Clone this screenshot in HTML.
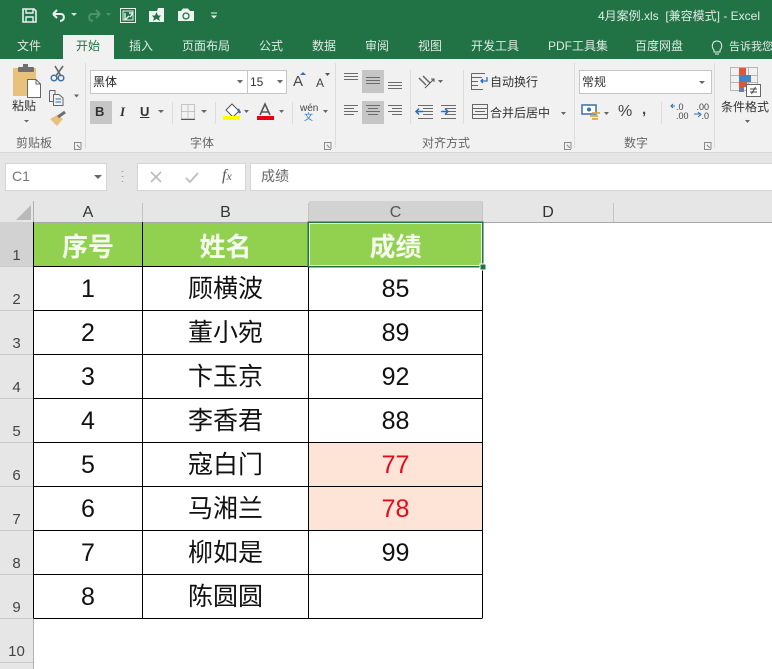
<!DOCTYPE html>
<html><head><meta charset="utf-8"><style>
html,body{margin:0;padding:0;background:#fff}
#p{position:relative;width:772px;height:669px;overflow:hidden;background:#fff;font-family:"Liberation Sans","Noto Sans CJK SC",sans-serif;color:#444}
#p div{position:absolute}
.t{white-space:nowrap;font-size:12px;line-height:16px}
.w{color:#dfeae4}
.g{color:#666}
.c{text-align:center}
.h{font-size:16px;line-height:20px;color:#333;text-align:center}
.r{font-size:15px;line-height:18px;color:#444;text-align:center;width:33px;left:0}
.d{font-size:25px;line-height:32px;color:#111;text-align:center;white-space:nowrap}
.hd{font-weight:bold;color:#f6fbef;font-size:26px;line-height:32px;text-align:center;white-space:nowrap;font-family:"Liberation Sans","Noto Sans CJK SC",sans-serif}
svg{position:absolute;left:0;top:0}
</style></head><body><div id="p">
<div style="left:0;top:0;width:772px;height:59px;background:#217346"></div>
<div style="left:63px;top:35px;width:51px;height:24px;background:#f1f1f1"></div>
<div style="left:0;top:59px;width:772px;height:93px;background:#f1f1f1;border-bottom:1px solid #d6d6d6"></div>
<div style="left:0;top:153px;width:772px;height:48px;background:#e6e6e6"></div>
<div style="left:90px;top:70px;width:157px;height:22px;background:#fff;border:1px solid #c6c6c6"></div>
<div style="left:247px;top:70px;width:38px;height:22px;background:#fff;border:1px solid #c6c6c6"></div>
<div style="left:579px;top:70px;width:131px;height:22px;background:#fff;border:1px solid #c6c6c6"></div>
<div style="left:90px;top:101px;width:22px;height:23px;background:#c6c6c6"></div>
<div style="left:362px;top:70px;width:22px;height:23px;background:#c6c6c6"></div>
<div style="left:362px;top:101px;width:22px;height:23px;background:#c6c6c6"></div>
<div style="left:5px;top:163px;width:100px;height:26px;background:#fff;border:1px solid #d4d4d4"></div>
<div style="left:137px;top:163px;width:107px;height:26px;background:#fff;border:1px solid #d4d4d4"></div>
<div style="left:250px;top:163px;width:522px;height:26px;background:#fff;border:1px solid #d4d4d4;border-right:0"></div>

<div class="t w" style="left:598px;top:8px;font-size:12px">4月案例.xls&nbsp; [兼容模式] - Excel</div>
<div class="t w" style="left:17px;top:38px">文件</div>
<div class="t" style="left:76px;top:38px;color:#217346">开始</div>
<div class="t w" style="left:129px;top:38px">插入</div>
<div class="t w" style="left:182px;top:38px">页面布局</div>
<div class="t w" style="left:259px;top:38px">公式</div>
<div class="t w" style="left:312px;top:38px">数据</div>
<div class="t w" style="left:365px;top:38px">审阅</div>
<div class="t w" style="left:418px;top:38px">视图</div>
<div class="t w" style="left:471px;top:38px">开发工具</div>
<div class="t w" style="left:548px;top:38px">PDF工具集</div>
<div class="t w" style="left:635px;top:38px">百度网盘</div>
<div class="t w" style="left:729px;top:39px;font-size:11px">告诉我您</div>

<div class="t" style="left:12px;top:98px;color:#333">粘贴</div>
<div class="t" style="left:93px;top:74px;color:#222">黑体</div>
<div class="t" style="left:250px;top:74px;color:#333">15</div>
<div class="t" style="left:490px;top:74px;color:#333">自动换行</div>
<div class="t" style="left:490px;top:105px;color:#333">合并后居中</div>
<div class="t" style="left:582px;top:74px;color:#333">常规</div>
<div class="t" style="left:721px;top:99px;color:#333">条件格式</div>
<div class="t" style="left:95px;top:104px;font-weight:bold;font-size:13px;color:#333">B</div>
<div class="t" style="left:120px;top:104px;font-style:italic;font-size:13px;font-family:'Liberation Serif',serif;font-weight:bold;color:#333">I</div>
<div class="t" style="left:140px;top:104px;font-size:13px;font-weight:bold;text-decoration:underline;color:#333">U</div>
<div class="t" style="left:293px;top:74px;font-size:15px;color:#444">A</div>
<div class="t" style="left:316px;top:75px;font-size:12px;color:#444">A</div>
<div class="t" style="left:300px;top:104px;font-size:10px;line-height:10px;color:#444">wén</div>
<div class="t" style="left:304px;top:112px;font-size:9px;line-height:10px;color:#2a6fb8">文</div>
<div class="t" style="left:618px;top:104px;font-size:16px;color:#444">%</div>
<div class="t" style="left:642px;top:102px;font-size:15px;font-weight:bold;color:#444">,</div>
<div class="t" style="left:676px;top:103px;font-size:9px;line-height:9px;color:#444">.0<br>.00</div>
<div class="t" style="left:695px;top:103px;font-size:9px;line-height:9px;color:#444;text-align:right;width:14px">.00<br>.0</div>

<div class="t g" style="left:16px;top:135px">剪贴板</div>
<div class="t g" style="left:190px;top:135px">字体</div>
<div class="t g" style="left:422px;top:135px">对齐方式</div>
<div class="t g" style="left:624px;top:135px">数字</div>

<div class="t" style="left:12px;top:168px;font-size:14px;color:#777">C1</div>
<div class="t" style="left:261px;top:168px;font-size:14px;color:#666">成绩</div>
<div class="t" style="left:222px;top:168px;font-size:16px;font-style:italic;font-family:'Liberation Serif',serif;color:#555">f<span style="font-size:12px">x</span></div>

<!-- sheet headers -->
<div style="left:0;top:201px;width:772px;height:21px;background:#e6e6e6;border-bottom:1px solid #a8a8a8"></div>
<div style="left:0;top:201px;width:33px;height:468px;background:#e6e6e6"></div>
<div style="left:33px;top:201px;width:1px;height:468px;background:#b0b0b0"></div>
<div style="left:309px;top:201px;width:174px;height:21px;background:#d2d2d2"></div>
<div style="left:0;top:222px;width:33px;height:44px;background:#d2d2d2"></div>
<div class="h" style="left:34px;top:203px;width:108px">A</div>
<div class="h" style="left:143px;top:203px;width:165px">B</div>
<div class="h" style="left:309px;top:203px;width:173px;color:#555">C</div>
<div class="h" style="left:483px;top:203px;width:130px">D</div>
<div class="r" style="top:247px">1</div>
<div class="r" style="top:291px">2</div>
<div class="r" style="top:335px">3</div>
<div class="r" style="top:379px">4</div>
<div class="r" style="top:423px">5</div>
<div class="r" style="top:467px">6</div>
<div class="r" style="top:511px">7</div>
<div class="r" style="top:555px">8</div>
<div class="r" style="top:599px">9</div>
<div class="r" style="top:643px">10</div>

<!-- cell fills -->
<div style="left:34px;top:223px;width:449px;height:44px;background:#92d050"></div>
<div style="left:309px;top:443px;width:173px;height:87px;background:#fde4d6"></div>

<div class="hd" style="left:34px;top:231px;width:108px">序号</div>
<div class="hd" style="left:143px;top:231px;width:165px">姓名</div>
<div class="hd" style="left:309px;top:231px;width:173px">成绩</div>

<div class="d" style="left:34px;top:273px;width:108px">1</div><div class="d" style="left:143px;top:273px;width:165px">顾横波</div><div class="d" style="left:309px;top:273px;width:173px">85</div>
<div class="d" style="left:34px;top:317px;width:108px">2</div><div class="d" style="left:143px;top:317px;width:165px">董小宛</div><div class="d" style="left:309px;top:317px;width:173px">89</div>
<div class="d" style="left:34px;top:361px;width:108px">3</div><div class="d" style="left:143px;top:361px;width:165px">卞玉京</div><div class="d" style="left:309px;top:361px;width:173px">92</div>
<div class="d" style="left:34px;top:405px;width:108px">4</div><div class="d" style="left:143px;top:405px;width:165px">李香君</div><div class="d" style="left:309px;top:405px;width:173px">88</div>
<div class="d" style="left:34px;top:449px;width:108px">5</div><div class="d" style="left:143px;top:449px;width:165px">寇白门</div><div class="d" style="left:309px;top:449px;width:173px;color:#e00b1c">77</div>
<div class="d" style="left:34px;top:493px;width:108px">6</div><div class="d" style="left:143px;top:493px;width:165px">马湘兰</div><div class="d" style="left:309px;top:493px;width:173px;color:#e00b1c">78</div>
<div class="d" style="left:34px;top:537px;width:108px">7</div><div class="d" style="left:143px;top:537px;width:165px">柳如是</div><div class="d" style="left:309px;top:537px;width:173px">99</div>
<div class="d" style="left:34px;top:581px;width:108px">8</div><div class="d" style="left:143px;top:581px;width:165px">陈圆圆</div>

<svg width="772" height="669" viewBox="0 0 772 669" fill="none">
<!-- table grid -->
<g stroke="#000" stroke-width="1" shape-rendering="crispEdges">
<path d="M34 266.500H308M33.500 310.500H482.500M33.500 354.500H482.500M33.500 398.500H482.500M33.500 442.500H482.500M33.500 486.500H482.500M33.500 530.500H482.500M33.500 574.500H482.500M33.500 618.500H482.500"/>
<path d="M142.500 222V618M308.500 266V618M482.500 266V618M33.500 222V618"/>
</g>
<g stroke="#c4c4c4" shape-rendering="crispEdges">
<path d="M142.500 203V222M308.500 203V222M482.500 203V222M613.500 203V222"/>
</g>
<g stroke="#c9c9c9" shape-rendering="crispEdges">
<path d="M0 266.500H33M0 310.500H33M0 354.500H33M0 398.500H33M0 442.500H33M0 486.500H33M0 530.500H33M0 574.500H33M0 618.500H33M0 662.500H33"/>
</g>
<path d="M31 205V220H16Z" fill="#b9b9b9"/>
<!-- selection -->
<rect x="308.500" y="222.500" width="174" height="44" stroke="#217346" stroke-width="2" shape-rendering="crispEdges"/>
<rect x="309.500" y="223.500" width="172" height="42" stroke="#e8f5dc" stroke-width="1" shape-rendering="crispEdges"/>
<rect x="480" y="264" width="6" height="6" fill="#217346" stroke="#fff" stroke-width="1" shape-rendering="crispEdges"/>
<!-- QAT -->
<g stroke="#e9f2ed" stroke-width="1.600">
<path d="M23 9H34L36 11V22H23Z"/><path d="M26 9V13H33V9M26 22V17H33V22" stroke-width="1.400"/>
<path d="M53 14H61C65 14 65 21 60 21M53 14L57 10M53 14L57 18" stroke-width="2"/>
</g>
<path d="M100 14H92C88 14 88 21 93 21M100 14L96 10M100 14L96 18" stroke="#4d9270" stroke-width="2"/>
<path d="M71 13H77L74 16Z" fill="#e9f2ed" opacity=".9"/>
<path d="M106 13H111L108.500 16Z" fill="#4d9270"/>
<rect x="120.500" y="8.500" width="15" height="14" stroke="#e9f2ed"/>
<path d="M123 11H133V20H123Z" stroke="#e9f2ed"/><path d="M125 20V13M125 20L129 16M129 13H133M133 13L130 17" stroke="#e9f2ed" stroke-width="1.400"/>
<path d="M149 11H157L158 8H164V22H149Z" fill="#eef5f1"/>
<path d="M156.500 12L158 15.500L161 15.500L159 18L160 21L156.500 19L153 21L154 18L152 15.500L155 15.500Z" fill="#217346"/>
<path d="M178 11H181L183 8.500H188L190 11H194V21H178Z" fill="#eef5f1"/>
<circle cx="186" cy="16" r="3" stroke="#217346" stroke-width="1.300"/>
<path d="M211 13H217" stroke="#eef5f1"/><path d="M211 15.500H217L214 18.500Z" fill="#eef5f1"/>
<!-- separators -->
<g stroke="#dcdcdc" shape-rendering="crispEdges">
<path d="M85.500 63V148M335.500 63V148M574.500 63V148M714.500 63V148M410.500 70V124M463.500 70V124M172.500 102V124M215.500 102V124M292.500 102V124M661.500 102V124"/>
</g>
<!-- clipboard -->
<path d="M13 68H36V96H27V78H13Z" fill="#e8c27c"/><path d="M13 78H27V96H13Z" fill="#e8c27c"/>
<rect x="18" y="67" width="16" height="5" rx="1" fill="#6f6f6f"/><rect x="23" y="64" width="5" height="4" fill="#6f6f6f"/>
<path d="M27.500 79.500H36L40.500 84V97.500H27.500Z" fill="#fff" stroke="#666"/><path d="M36 79.500V84H40.500" stroke="#666"/>
<path d="M55 66L61 76M63 66L56 76" stroke="#666" stroke-width="1.600"/>
<circle cx="54" cy="78" r="2.800" stroke="#3a6fa8" stroke-width="1.500"/><circle cx="61" cy="78" r="2.800" stroke="#3a6fa8" stroke-width="1.500"/>
<path d="M49.500 90.500H55V95M49.500 90.500V101.500H53M53.500 94.500H59L63 98V105.500H53.500Z" stroke="#666"/><path d="M55.500 99H61M55.500 102H61" stroke="#3a6fa8"/>
<path d="M74 94.500H79L76.500 97.500Z" fill="#666"/>
<path d="M24 120H29L26.500 122.500Z" fill="#666"/>
<path d="M50 119L57 126L63 119L57 115Z" fill="#e8c27c"/><path d="M58 117L65 112" stroke="#6f6f6f" stroke-width="3"/>
<!-- arrows/dropdown triangles -->
<g fill="#666">
<path d="M237 80H243L240 83.500ZM277 80H283L280 83.500ZM158 110H164L161 113ZM201 110H207L204 113ZM244 110H249L246.500 113ZM279 110H284L281.500 113ZM323 110H328L325.500 113ZM438 80H443L440.500 83ZM561 112H566L563.500 115ZM699 81H705L702 84ZM604 112H609L606.500 115ZM745 120H750L747.500 123Z"/>
</g>
<path d="M300 75L303 72L306 75Z" fill="#3a6fa8"/><path d="M325 73H330L327.500 76Z" fill="#555"/>
<!-- borders icon -->
<path d="M181.500 104.500H194.500V118.500H181.500ZM188 104.500V118.500M181.500 111.500H194.500" stroke="#999" stroke-dasharray="1 1"/><path d="M181 119.500H195" stroke="#555"/>
<!-- fill + font colour -->
<path d="M226 110L232 104L239 111L233 117Z" fill="#fff" stroke="#555"/><path d="M238 109L240 113" stroke="#3a6fa8" stroke-width="2.400"/>
<rect x="223" y="116" width="17" height="4" fill="#ffff00"/>
<path d="M260 115L265 104L270 115M262 112H268" stroke="#555" stroke-width="1.600"/>
<rect x="257" y="116" width="17" height="4" fill="#e60012"/>
<!-- align icons -->
<g stroke="#6b6b6b" shape-rendering="crispEdges">
<path d="M344 73.500H358M344 76.500H358M344 79.500H358"/>
<path d="M366 77.500H380M366 80.500H380M366 83.500H380"/>
<path d="M388 82.500H402M388 85.500H402M388 88.500H402"/>
<path d="M344 105.500H358M344 108.500H354M344 111.500H358M344 114.500H354"/>
<path d="M366 105.500H380M368 108.500H378M366 111.500H380M368 114.500H378"/>
<path d="M388 105.500H402M392 108.500H402M388 111.500H402M392 114.500H402"/>
<path d="M423 108.500H433M423 111.500H433M423 114.500H433M418 105.500H433M418 118.500H433"/>
<path d="M445 108.500H456M445 111.500H456M445 114.500H456M441 105.500H456M441 118.500H456"/>
</g>
<path d="M423 111.500H416M419 108.500L416 111.500L419 114.500" stroke="#2a6fb8" stroke-width="1.500"/>
<path d="M441 111.500H448M445 108.500L448 111.500L445 114.500" stroke="#2a6fb8" stroke-width="1.500"/>
<path d="M419 78L426 85M423 76L430 83" stroke="#666" stroke-width="1.500"/><path d="M425 88L434 79M431 79H434V82" stroke="#555"/>
<!-- wrap -->
<path d="M471.500 73.500H485M471.500 77.500H482M471.500 81.500H478M471.500 85.500H478M471.500 73.500V89.500H483" stroke="#666"/>
<path d="M487 77V81H481M483 79L481 81L483 83" stroke="#2a6fb8" stroke-width="1.300"/>
<!-- merge -->
<rect x="472.500" y="104.500" width="15" height="14" stroke="#666"/><path d="M472.500 108.500H487.500M472.500 114.500H487.500M475 111.500H485" stroke="#666"/>
<!-- number -->
<rect x="582" y="105" width="14" height="9" fill="#fff" stroke="#3a6fa8" stroke-width="1.500"/><circle cx="589" cy="109.500" r="2" fill="#3a6fa8"/>
<path d="M592 113H600M590 116H598M592 119H598" stroke="#e0a93b" stroke-width="1.800"/>
<path d="M675 106H671M673 104L671 106L673 108" stroke="#2a6fb8"/>
<path d="M695 114H702M699 112L702 114.500L699 117" stroke="#2a6fb8" transform="translate(-1,0)"/>
<!-- conditional format -->
<path d="M730.500 67.500H757.500V90.500H730.500ZM739.500 67.500V90.500M748.500 67.500V90.500M730.500 75.500H757.500M730.500 82.500H757.500" stroke="#b5b5b5"/>
<rect x="739" y="68" width="7" height="7" fill="#d9583c"/><rect x="739" y="75" width="12" height="7" fill="#3f86c8"/><rect x="739" y="81" width="8" height="6" fill="#d9583c"/><rect x="739" y="87" width="5" height="5" fill="#6a7fa8"/>
<rect x="746.500" y="84.500" width="14" height="12" fill="#fff" stroke="#666"/>
<path d="M750 89H757M750 92H757M755.500 87L751.500 94" stroke="#444"/>
<!-- launchers -->
<g stroke="#8a8a8a" shape-rendering="crispEdges"><path d="M74 142.500H81V149M74.500 142V149.500H81M77 145L80 148"/>
<path d="M324 142.500H331V149M324.500 142V149.500H331M327 145L330 148"/>
<path d="M564 142.500H571V149M564.500 142V149.500H571M567 145L570 148"/>
<path d="M704 142.500H711V149M704.500 142V149.500H711M707 145L710 148"/></g>
<!-- light bulb -->
<path d="M714 50C711 47 712 41 717 41C722 41 723 47 720 50V52H714Z" stroke="#e8f1ec"/><path d="M715 54H719" stroke="#e8f1ec"/>
<!-- formula bar -->
<path d="M94 175H102L98 179Z" fill="#666"/>
<path d="M122.500 171V172M122.500 176V177M122.500 181V182" stroke="#999" stroke-width="1.500"/>
<path d="M151 172L161 182M161 172L151 182" stroke="#bdbdbd" stroke-width="1.800"/>
<path d="M186 178L190 182L198 173" stroke="#bdbdbd" stroke-width="1.800"/>
</svg>
</div></body></html>
